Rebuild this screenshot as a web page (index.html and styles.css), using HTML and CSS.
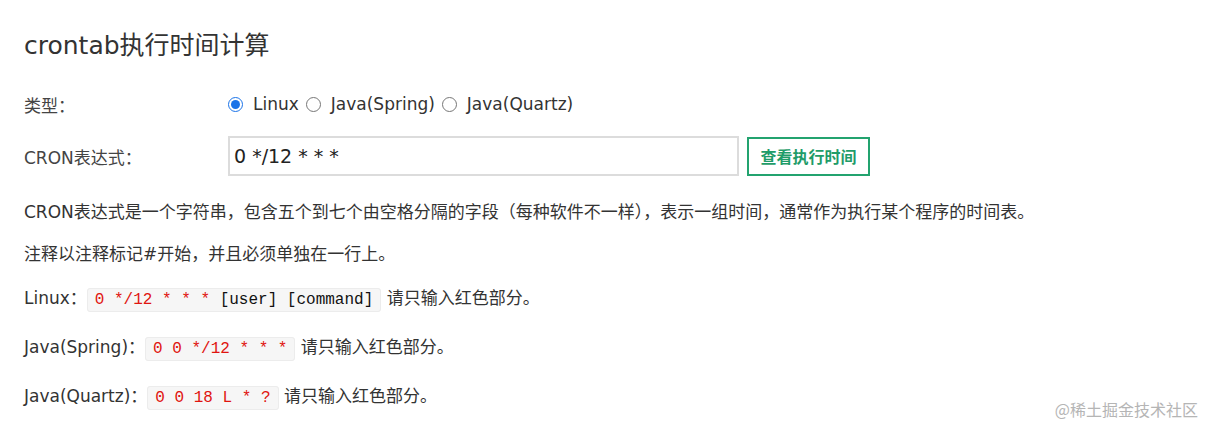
FILE: index.html
```html
<!DOCTYPE html>
<html lang="zh">
<head>
<meta charset="utf-8">
<title>crontab执行时间计算</title>
<link rel="stylesheet" href="styles.css">
</head>
<body>
<div class="page">
  <h1 class="title">crontab执行时间计算</h1>
  <div class="form-row">
    <span class="label">类型：</span>
    <div class="radios">
      <label class="radio"><input type="radio" name="type" checked>Linux</label>
      <label class="radio"><input type="radio" name="type">Java(Spring)</label>
      <label class="radio"><input type="radio" name="type">Java(Quartz)</label>
    </div>
  </div>
  <div class="form-row">
    <span class="label">CRON表达式：</span>
    <input class="cron-input" type="text" value="0 */12 * * *">
    <button class="btn">查看执行时间</button>
  </div>
  <p class="note">CRON表达式是一个字符串，包含五个到七个由空格分隔的字段（每种软件不一样），表示一组时间，通常作为执行某个程序的时间表。</p>
  <p class="note">注释以注释标记#开始，并且必须单独在一行上。</p>
  <p class="note example">Linux：<code class="code"><span class="red">0 */12 * * *</span> [user] [command]</code> 请只输入红色部分。</p>
  <p class="note example">Java(Spring)：<code class="code"><span class="red">0 0 */12 * * *</span></code> 请只输入红色部分。</p>
  <p class="note example">Java(Quartz)：<code class="code"><span class="red">0 0 18 L * ?</span></code> 请只输入红色部分。</p>
</div>
<div class="watermark">@稀土掘金技术社区</div>
</body>
</html>
```
FILE: styles.css
```css
html, body {
  margin: 0;
  padding: 0;
  background: #fff;
}
body {
  font-family: "DejaVu Sans", "Noto Sans CJK SC", sans-serif;
  font-size: 17px;
  color: #333;
  position: relative;
  width: 1206px;
  height: 429px;
  overflow: hidden;
}
.page {
  padding: 30px 24px 0 24px;
}
.title {
  margin: 0 0 22px 0;
  font-size: 25px;
  line-height: 32px;
  font-weight: normal;
  color: #333;
}
.form-row {
  display: flex;
  align-items: center;
  height: 40px;
  margin-bottom: 12px;
}
.label {
  width: 204px;
  flex: none;
  color: #444;
}
.radios {
  display: flex;
  align-items: center;
  gap: 7px;
}
.radio {
  display: inline-flex;
  align-items: center;
  gap: 10px;
}
.radio input {
  margin: 0;
  width: 15px;
  height: 15px;
  accent-color: #1a73e8;
}
.cron-input {
  box-sizing: border-box;
  width: 511px;
  height: 40px;
  border: 2px solid #dcdcdc;
  padding: 0 4px;
  font-family: "DejaVu Sans", sans-serif;
  font-size: 19px;
  color: #222;
  outline: none;
}
.btn {
  box-sizing: border-box;
  margin-left: 8px;
  height: 39px;
  width: 123px;
  background: #fff;
  border: 2px solid #23a36f;
  color: #1f9c69;
  font-family: "Noto Sans CJK SC", sans-serif;
  font-size: 16px;
  font-weight: bold;
  padding: 0;
}
.note {
  margin: 0 0 16px 0;
  line-height: 26px;
}
.note:first-of-type {
  margin-top: 23px;
}
.example {
  line-height: 31px;
}
.code {
  font-family: "Liberation Mono", monospace;
  font-size: 16px;
  background: #f6f6f6;
  border: 1px solid #ececec;
  border-radius: 3px;
  padding: 2px 7px;
  color: #111;
}
.red {
  color: #e0140f;
}
.watermark {
  position: absolute;
  right: 8px;
  bottom: 8px;
  color: #b5b5b5;
  font-family: "Noto Sans CJK SC", sans-serif;
  font-size: 16px;
}
```
